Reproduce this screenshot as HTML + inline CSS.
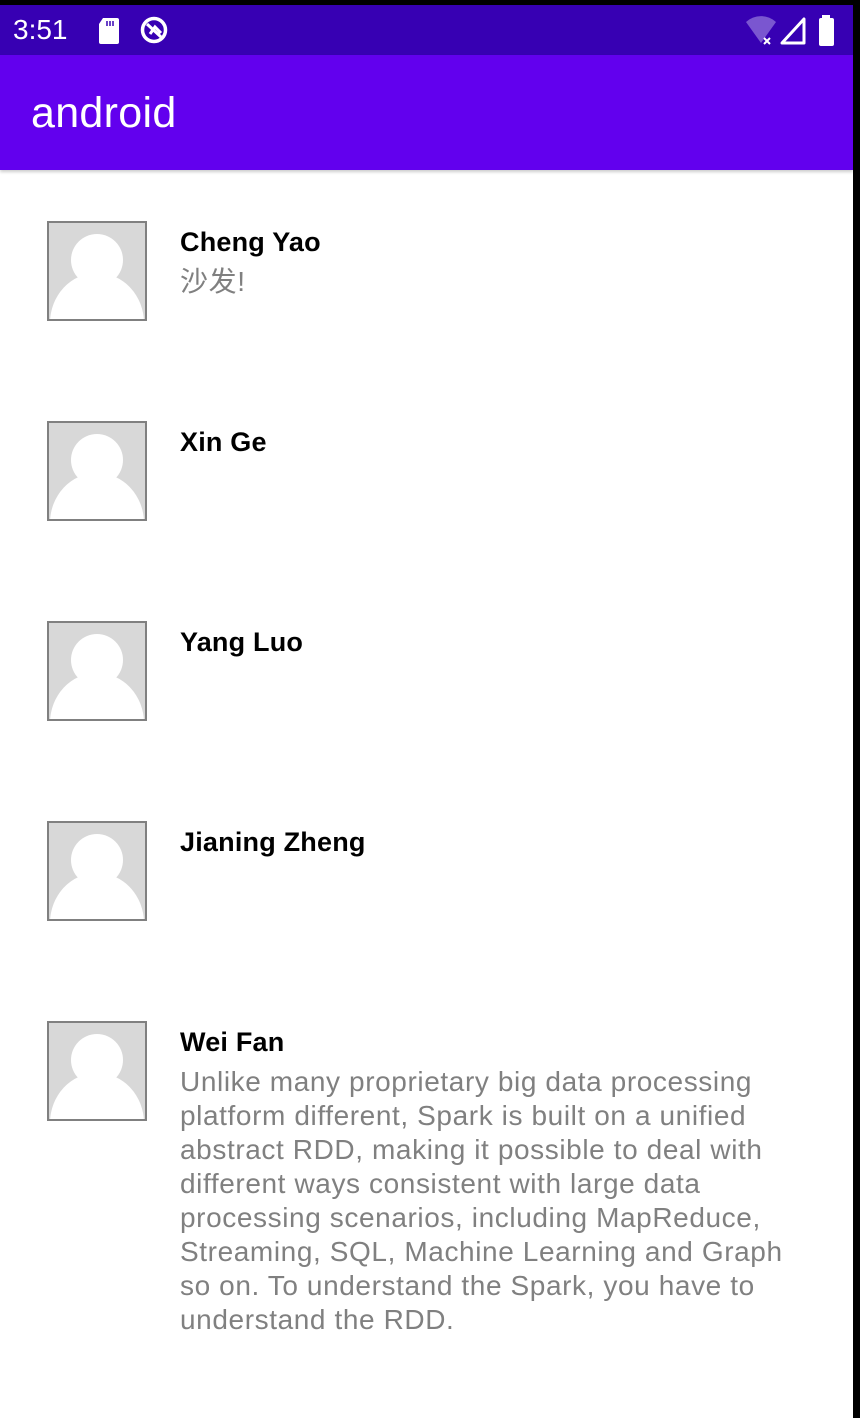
<!DOCTYPE html><html><head><style>
body{margin:0;width:860px;height:1418px;background:#fff;position:relative;overflow:hidden;font-family:"Liberation Sans","Noto Sans CJK SC",sans-serif}
.top{position:absolute;left:0;top:0;width:860px;height:5px;background:#000}
.sb{position:absolute;left:0;top:5px;width:853px;height:50px;background:#3700b3;color:#fff}
.ab{position:absolute;left:0;top:55px;width:853px;height:115px;background:#6200ee;box-shadow:0 2px 3px rgba(0,0,0,.2)}
.ab span{position:absolute;left:31px;top:34px;font-size:43px;color:#fff;letter-spacing:0.3px}
.edge{position:absolute;right:0;top:0;width:7px;height:1418px;background:#000}
.row{position:absolute;left:47px;width:780px}
.av{position:absolute;left:0;top:0;width:96px;height:96px;border:2px solid #808080;background:#d8d8d8;overflow:hidden}
.nm{position:absolute;left:133px;top:6px;font-weight:bold;font-size:27px;color:#000;letter-spacing:0.2px}
.tx{position:absolute;left:133px;top:44px;font-size:28px;color:#808080;line-height:34px;width:650px;letter-spacing:0.6px}
</style></head><body>
<div class="top"></div>
<div class="sb">
<span style="position:absolute;left:13px;top:9px;font-size:28px">3:51</span>
<svg style="position:absolute;left:97px;top:13px" width="24" height="26"><path d="M6 0h14a2 2 0 0 1 2 2v22a2 2 0 0 1-2 2H4a2 2 0 0 1-2-2V6z" fill="#fff"/><path d="M10 3v5M13 3v5M16 3v5" stroke="#3700b3" stroke-width="1.5"/></svg>
<svg style="position:absolute;left:139px;top:10px" width="30" height="30"><circle cx="15" cy="15" r="11.5" stroke="#fff" stroke-width="3.5" fill="none"/><path d="M8 9l14 13M11 19l5-7 6 6" stroke="#fff" stroke-width="3" fill="none"/></svg>
<svg style="position:absolute;left:745px;top:10px" width="34" height="32"><path d="M1 7a22 22 0 0 1 30 0L16 28z" fill="#7a56d0"/><path d="M19 23l6 6M25 23l-6 6" stroke="#fff" stroke-width="2"/></svg>
<svg style="position:absolute;left:780px;top:12px" width="26" height="28"><path d="M24 2v24H2z" fill="none" stroke="#fff" stroke-width="3" stroke-linejoin="round"/></svg>
<svg style="position:absolute;left:818px;top:10px" width="20" height="32"><rect x="4" y="0" width="8" height="4" fill="#fff"/><rect x="1" y="3" width="15" height="28" rx="2" fill="#fff"/></svg>
</div>
<div class="ab"><span>android</span></div>
<div class="edge"></div>

<div class="row" style="top:221px"><div class="av"><svg width="96" height="96"><circle cx="48" cy="37" r="26" fill="#fff"/><ellipse cx="48" cy="100" rx="47" ry="50" fill="#fff"/></svg></div><div class="nm">Cheng Yao</div><div class="tx">沙发!</div></div>
<div class="row" style="top:421px"><div class="av"><svg width="96" height="96"><circle cx="48" cy="37" r="26" fill="#fff"/><ellipse cx="48" cy="100" rx="47" ry="50" fill="#fff"/></svg></div><div class="nm">Xin Ge</div></div>
<div class="row" style="top:621px"><div class="av"><svg width="96" height="96"><circle cx="48" cy="37" r="26" fill="#fff"/><ellipse cx="48" cy="100" rx="47" ry="50" fill="#fff"/></svg></div><div class="nm">Yang Luo</div></div>
<div class="row" style="top:821px"><div class="av"><svg width="96" height="96"><circle cx="48" cy="37" r="26" fill="#fff"/><ellipse cx="48" cy="100" rx="47" ry="50" fill="#fff"/></svg></div><div class="nm">Jianing Zheng</div></div>
<div class="row" style="top:1021px"><div class="av"><svg width="96" height="96"><circle cx="48" cy="37" r="26" fill="#fff"/><ellipse cx="48" cy="100" rx="47" ry="50" fill="#fff"/></svg></div><div class="nm">Wei Fan</div><div class="tx">Unlike many proprietary big data processing<br>platform different, Spark is built on a unified<br>abstract RDD, making it possible to deal with<br>different ways consistent with large data<br>processing scenarios, including MapReduce,<br>Streaming, SQL, Machine Learning and Graph<br>so on. To understand the Spark, you have to<br>understand the RDD.</div></div>
</body></html>
